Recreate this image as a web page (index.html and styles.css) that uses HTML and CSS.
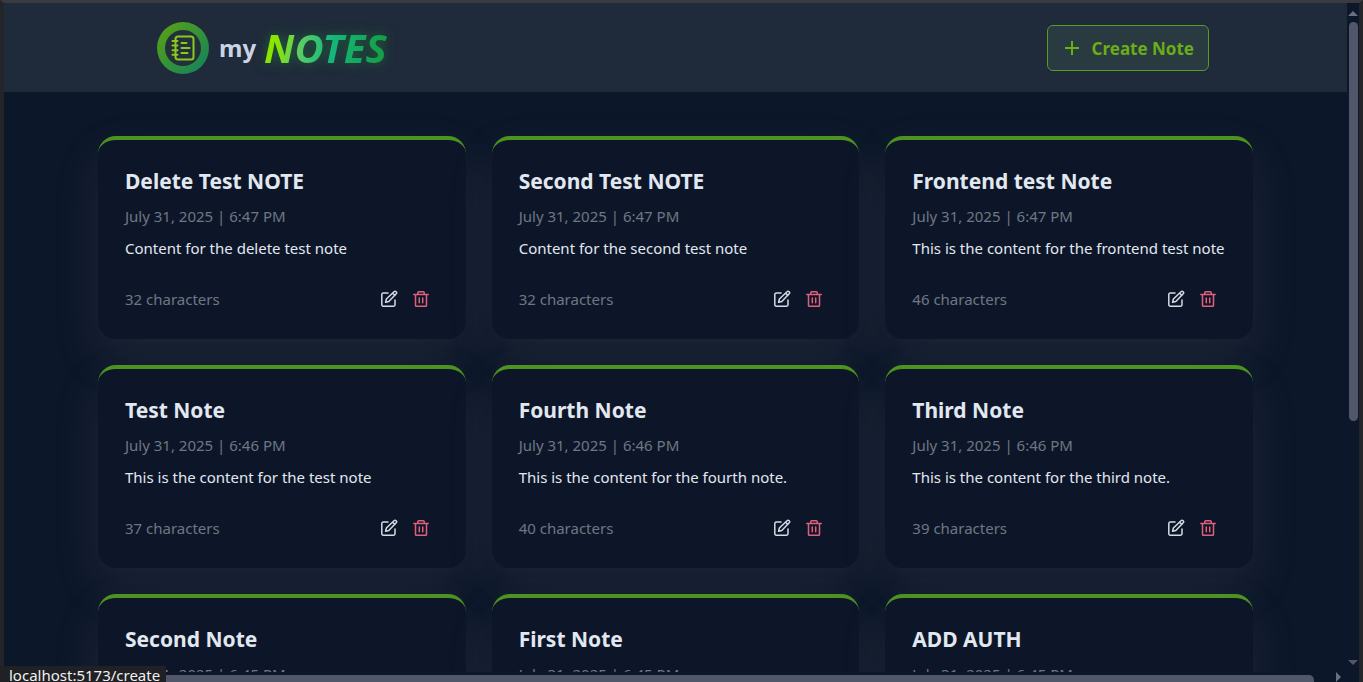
FILE: index.html
```html
<!DOCTYPE html>
<html lang="en">
<head>
<meta charset="utf-8">
<title>my NOTES</title>
<link rel="stylesheet" href="styles.css">
</head>
<body>
<svg class="sprite" aria-hidden="true">
  <symbol id="edit" viewBox="0 0 18 18">
    <path d="M8 3H3.200A1.400 1.400 0 0 0 1.800 4.400v10.400a1.400 1.400 0 0 0 1.400 1.400h10.400a1.400 1.400 0 0 0 1.400-1.400V10"/>
    <path d="M14 1.800a1.300 1.300 0 0 1 2.200 2L8.800 11.400l-3.200.8.800-3.200zM12.600 3.200l2.200 2.200"/>
  </symbol>
  <symbol id="trash" viewBox="0 0 18 18">
    <path d="M1.800 4.500h14.400M5.800 4.500V2.600a.9.900 0 0 1 .9-.9h4.600a.9.900 0 0 1 .9.900v1.900M3.500 4.500v10.900a.9.900 0 0 0 .9.900h9.200a.9.900 0 0 0 .9-.9V4.500M7.300 8v4.800M10.700 8v4.800"/>
  </symbol>
</svg>
<div class="shell">
  <div class="page">
    <header class="header">
      <div class="header-inner">
        <div class="brand">
          <span class="logo">
            <svg viewBox="0 0 24 26" aria-hidden="true">
              <rect x="4.500" y="1.500" width="18" height="23" rx="2.500"/>
              <path d="M1.500 6h5M1.500 10.600h5M1.500 15.200h5M1.500 19.800h5M10.500 8h5M10.500 13h8M10.500 18h6"/>
            </svg>
          </span>
          <h1 class="wordmark"><span class="my">my</span> <span class="notes">NOTES</span></h1>
        </div>
        <button class="create" type="button">
          <svg viewBox="0 0 16 16" aria-hidden="true"><path d="M8 1v14M1 8h14"/></svg>
          Create Note
        </button>
      </div>
    </header>
    <main class="grid" id="notes"></main>
  </div>
  <div class="track-y" aria-hidden="true"><i class="arrow up"></i><i class="thumb-y"></i><i class="arrow down"></i></div>
  <div class="track-x" aria-hidden="true"><i class="thumb-x"></i><i class="arrow right"></i></div>
</div>
<div class="status">localhost:5173/create</div>
<script src="notes.js"></script>
</body>
</html>
```
FILE: styles.css
```css
* { box-sizing: border-box; }
body {
  margin: 0;
  background: #0d172a;
  color: #e2e8f0;
  font-family: "Noto Sans", sans-serif;
  overflow: hidden;
}
button { font: inherit; cursor: pointer; }
h1, h2, p { margin: 0; }
.sprite { position: absolute; width: 0; height: 0; }
.shell {
  height: 100vh;
  display: grid;
  grid-template: minmax(0, 1fr) 10px / minmax(0, 1fr) 12px;
  border: solid #242528;
  border-width: 3px 4px 0;
  border-top-color: #3a3b3e;
}
.page { overflow: hidden; }
.header { background: #1f2a3a; }
.header-inner {
  max-width: 1155px;
  margin: 0 auto;
  padding: 19px 44px 18px 59px;
  display: flex;
  align-items: center;
  justify-content: space-between;
}
.brand { display: flex; align-items: center; gap: 10px; }
.logo {
  width: 52px;
  height: 52px;
  display: grid;
  place-items: center;
  border: 8px solid transparent;
  border-radius: 50%;
  background: linear-gradient(#223139, #223139) padding-box, linear-gradient(135deg, #5ea30f, #0f8060) border-box;
}
.logo svg { width: 24px; height: 26px; fill: none; stroke: #8cc722; stroke-width: 2; stroke-linecap: round; }
.wordmark { display: flex; align-items: center; gap: 8px; line-height: 48px; }
.my { font-size: 24px; color: #cbd5e1; }
.notes {
  padding-right: 4px;
  font-size: 40px;
  font-style: italic;
  color: transparent;
  background: linear-gradient(100deg, #8ae600 12%, #5fcf62 28%, #14b87c 52%, #14a047 90%);
  background-clip: text;
  filter: drop-shadow(0 0 6px rgba(34, 160, 60, .5));
}
.create {
  height: 46px;
  padding: 0 14px 0 16px;
  display: flex;
  align-items: center;
  gap: 12px;
  border: 1px solid #5c9a24;
  border-radius: 6px;
  background: #293a41;
  color: #6aad19;
  font-size: 17px;
  font-weight: 700;
}
.create svg { width: 16px; height: 16px; stroke: currentColor; stroke-width: 2; }
.grid {
  max-width: 1155px;
  margin: 44px auto;
  display: grid;
  grid-template-columns: repeat(3, minmax(0, 1fr));
  gap: 26px;
}
.card {
  padding: 24px 26px 25px 27px;
  border-top: 4px solid #4d931f;
  border-radius: 18px;
  background: #0d1629;
  box-shadow: 0 20px 48px rgba(120, 125, 125, .14);
}
.card h2 { font-size: 21px; line-height: 34px; }
.card .date { margin-top: 4px; font-size: 15px; line-height: 28px; color: #6f7683; }
.card .body { margin-top: 4px; font-size: 15px; line-height: 28px; white-space: nowrap; }
.card .foot { margin-top: 22px; display: flex; align-items: center; gap: 14px; padding-right: 10px; line-height: 30px; font-size: 15px; color: #6f7683; }
.count { flex: 1; }
.icon { padding: 0; border: 0; background: none; height: 18px; color: #d5dbe5; }
.icon.delete { color: #e0607a; }
.icon svg { display: block; width: 18px; height: 18px; fill: none; stroke: currentColor; stroke-width: 1.5; stroke-linejoin: round; stroke-linecap: round; }
.track-y {
  grid-row: span 2;
  grid-column: 2;
  display: flex;
  flex-direction: column;
  align-items: center;
  padding: 8px 0 17px;
  gap: 6px;
}
.thumb-y { width: 9px; flex: 0 0 61%; border-radius: 5px; background: #51566a; }
.track-x { grid-row: 2; grid-column: 1; display: flex; align-items: flex-end; gap: 22px; padding-right: 6px; }
.thumb-x { flex: 1; height: 7px; border-radius: 0 5px 0 0; background: #51566a; }
.arrow { border: 5px solid transparent; }
.up { border-top: 0; border-bottom-color: #6b7080; }
.down { border-bottom: 0; border-top-color: #51566a; margin-top: auto; }
.right { border-right: 0; border-left-color: #6b7080; }
.status {
  position: absolute;
  left: 0;
  bottom: 0;
  height: 16px;
  padding: 0 6px 0 9px;
  background: #202124;
  color: #f0f0f0;
  font-size: 15px;
  line-height: 19px;
  overflow: hidden;
}
```
FILE: notes.js
```js
const notes = [
  ["Delete Test NOTE", "6:47 PM", "Content for the delete test note", 32],
  ["Second Test NOTE", "6:47 PM", "Content for the second test note", 32],
  ["Frontend test Note", "6:47 PM", "This is the content for the frontend test note", 46],
  ["Test Note", "6:46 PM", "This is the content for the test note", 37],
  ["Fourth Note", "6:46 PM", "This is the content for the fourth note.", 40],
  ["Third Note", "6:46 PM", "This is the content for the third note.", 39],
  ["Second Note", "6:45 PM", "This is the content for the second note.", 40],
  ["First Note", "6:45 PM", "This is the content for the first note.", 39],
  ["ADD AUTH", "6:45 PM", "Add authentication to the app", 29]
];
document.getElementById("notes").innerHTML = notes.map(([title, time, body, count]) => `
  <article class="card">
    <h2>${title}</h2>
    <p class="date">July 31, 2025 | ${time}</p>
    <p class="body">${body}</p>
    <div class="foot">
      <span class="count">${count} characters</span>
      <button class="icon" type="button" aria-label="Edit ${title}"><svg><use href="#edit"/></svg></button>
      <button class="icon delete" type="button" aria-label="Delete ${title}"><svg><use href="#trash"/></svg></button>
    </div>
  </article>`).join("");
```
